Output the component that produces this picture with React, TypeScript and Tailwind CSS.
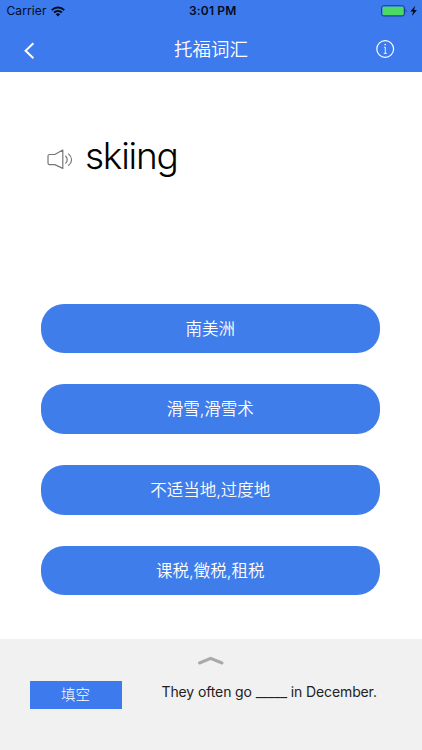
import React from 'react';

const cjk = "font-['Inter','Noto_Sans_CJK_SC',sans-serif]";

const options: string[] = ['南美洲', '滑雪,滑雪术', '不适当地,过度地', '课税,徵税,租税'];

function WifiIcon() {
  return (
    <svg width="14" height="11" viewBox="0 0 14 11" fill="none" stroke="#040b1c" strokeWidth="2">
      <path d="M0.8 4.1C4.3 0.7 9.7 0.7 13.2 4.1" />
      <path d="M3.1 6.5C5.3 4.4 8.7 4.4 10.9 6.5" />
      <path d="M7 10.4L4.8 8.2C6 7 8 7 9.2 8.2Z" fill="#040b1c" stroke="none" />
    </svg>
  );
}

function BatteryIcon() {
  return (
    <svg width="38" height="12" viewBox="0 0 38 12">
      <rect x="0.5" y="0.7" width="23" height="10.3" rx="2.2" fill="none" stroke="#1c4296" strokeWidth="1" />
      <rect x="1.6" y="1.8" width="20.8" height="8.1" rx="1.2" fill="#4cd964" />
      <path d="M24.6 4.2C26 4.7 26 7 24.6 7.5Z" fill="#1c4296" />
      <path d="M34.2 0.8L29.4 6.4H32.1L31 11L35.9 5.1H33Z" fill="#040b1c" />
    </svg>
  );
}

function StatusBar() {
  return (
    <div className="grid h-[22px] grid-cols-3 items-center pl-[6.5px] pr-[3px] text-[#040b1c]">
      <div className="flex items-center gap-[4.5px]">
        <span className="text-[12px] leading-[22px] tracking-[0.1px]">Carrier</span>
        <WifiIcon />
      </div>
      <span className="text-center text-[12px] font-semibold leading-[22px] tracking-[0.15px]">3:01 PM</span>
      <div className="flex justify-end">
        <BatteryIcon />
      </div>
    </div>
  );
}

function NavBar() {
  return (
    <div className="flex h-[50px] items-center justify-between pl-[23px] pr-[27px] text-white">
      <svg width="12" height="18" viewBox="0 0 12 18" fill="none" stroke="currentColor" strokeWidth="2" className="mt-[7px]">
        <path d="M10.4 1.2L2.6 8.7L10.4 16.2" />
      </svg>
      <h1 className="ml-[12px] mt-[3px] text-[18.5px] font-[350] leading-6">托福词汇</h1>
      <svg width="20" height="20" viewBox="0 0 20 20" fill="none" stroke="currentColor" strokeWidth="1.2" className="mt-[4px]">
        <circle cx="10.2" cy="10" r="8.4" />
        <path d="M9 8.2H10.3V14.4M8.8 14.4H11.8" strokeWidth="0.9" />
        <circle cx="10.2" cy="5.6" r="0.8" fill="currentColor" stroke="none" />
      </svg>
    </div>
  );
}

function SpeakerIcon() {
  return (
    <svg width="27" height="22" viewBox="0 0 27 22" fill="none" stroke="#777777" strokeWidth="1.2" strokeLinejoin="round" strokeLinecap="round">
      <path d="M2.6 5.5H7.8L15.8 1V19.4L7.8 15.6H2.6Q1 15.6 1 14V7Q1 5.5 2.6 5.5Z" />
      <path d="M18.7 7.2C20.7 9.1 20.7 12.2 18.7 14.1" />
      <path d="M21.5 4.9C25.6 8.3 25.6 13 21.5 16.4" />
    </svg>
  );
}

export default function App() {
  return (
    <div className={`flex h-[750px] w-[422px] flex-col overflow-hidden bg-white ${cjk}`}>
      <header className="h-[72px] shrink-0 bg-[#3c7aee]">
        <StatusBar />
        <NavBar />
      </header>

      <main className="flex h-[567px] shrink-0 flex-col">
        <div className="flex h-[231.5px] items-start pl-[47px] pt-[60px]">
          <div className="mt-[17px]">
            <SpeakerIcon />
          </div>
          <span className="ml-[11px] text-[37px] font-light leading-[48px] tracking-[-1.25px] text-black">skiing</span>
        </div>
        <div className="flex flex-col gap-[31.3px] pl-[40.5px] pr-[42px]">
          {options.map((o) => (
            <button key={o} className="h-[49.5px] rounded-[23px] bg-[#3f7deb] pt-[2px] text-[16.5px] font-[350] leading-[47.5px] text-white">
              {o}
            </button>
          ))}
        </div>
      </main>

      <footer className="flex flex-1 flex-col bg-[#f1f1f1]">
        <svg width="28" height="10" viewBox="0 0 28 10" fill="none" stroke="#a9a9a9" strokeWidth="3" strokeLinecap="round" strokeLinejoin="round" className="ml-[197px] mt-[16px]">
          <path d="M2.5 8L13.7 3.3L25 8" />
        </svg>
        <div className="flex items-start pl-[29.5px] pt-[16px]">
          <button className="h-[27.5px] w-[92px] bg-[#3c7aee] text-[14.5px] font-light leading-[27.5px] text-white">填空</button>
          <p className="ml-[40px] whitespace-nowrap text-[14px] leading-[21px] tracking-[-0.12px] text-[#222222]">They often go _____ in December.</p>
        </div>
      </footer>
    </div>
  );
}
